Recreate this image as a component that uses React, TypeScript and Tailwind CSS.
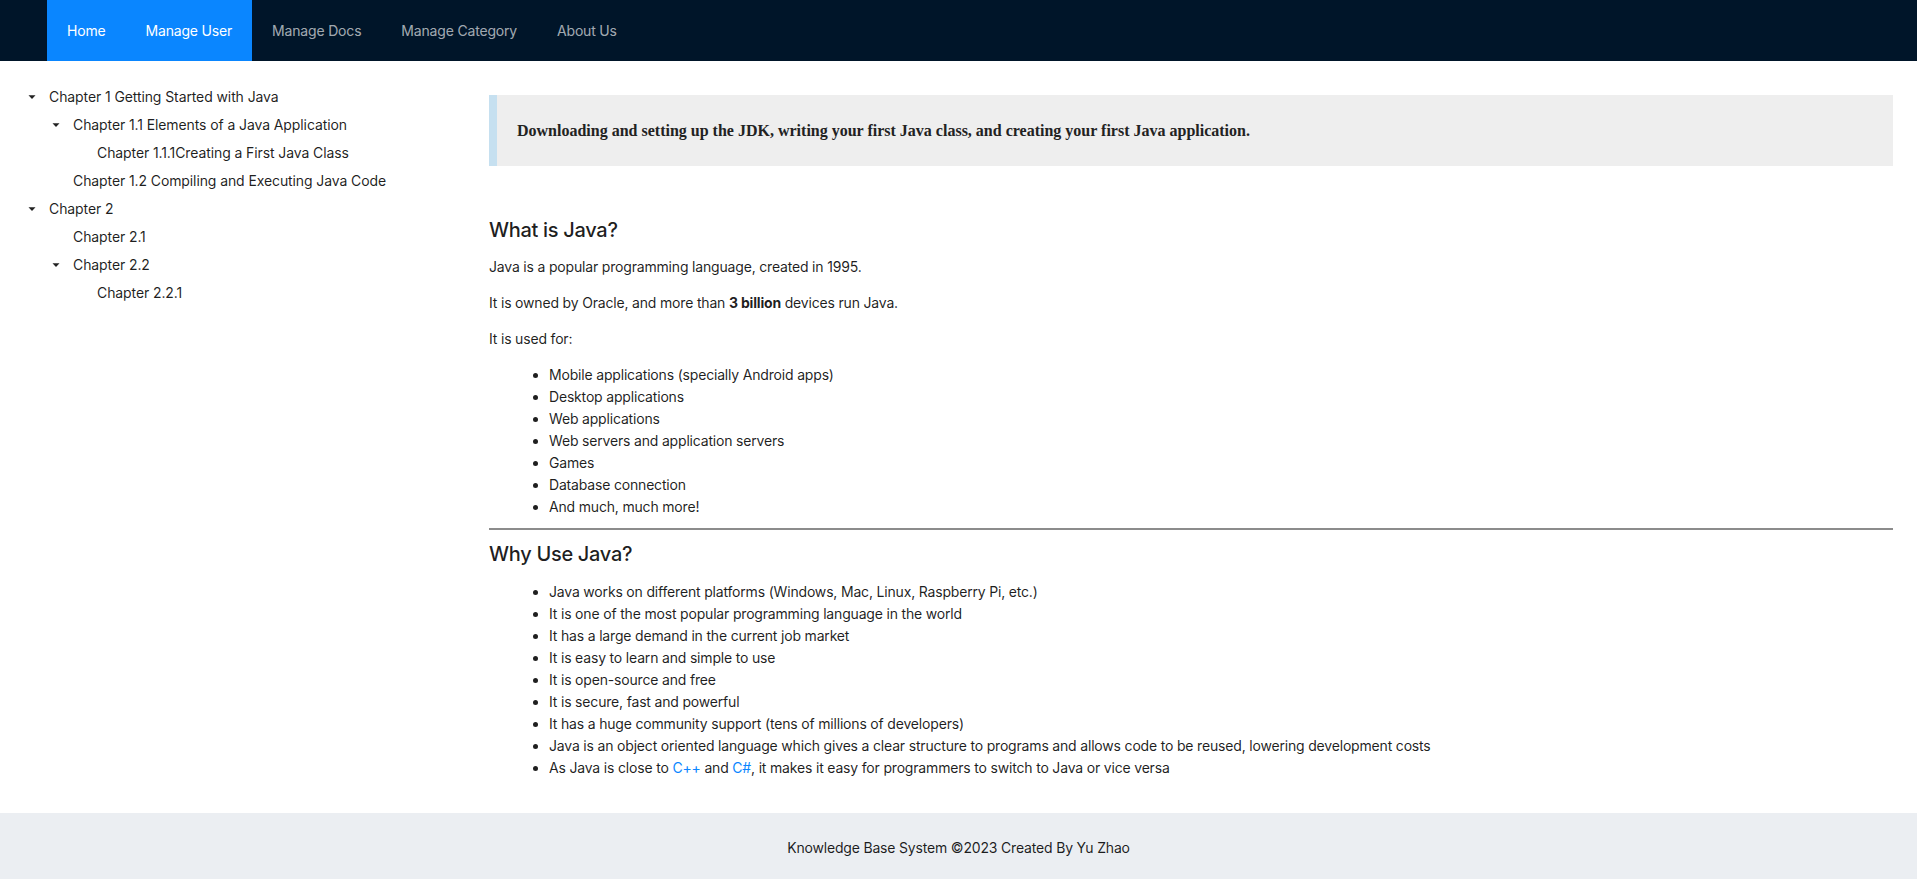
import React from 'react';

const navItems = [
  { label: 'Home', active: true },
  { label: 'Manage User', active: true },
  { label: 'Manage Docs', active: false },
  { label: 'Manage Category', active: false },
  { label: 'About Us', active: false },
];

type TreeNode = { title: string; level: number; open?: boolean };

const tree: TreeNode[] = [
  { title: 'Chapter 1 Getting Started with Java', level: 0, open: true },
  { title: 'Chapter 1.1 Elements of a Java Application', level: 1, open: true },
  { title: 'Chapter 1.1.1Creating a First Java Class', level: 2 },
  { title: 'Chapter 1.2 Compiling and Executing Java Code', level: 1 },
  { title: 'Chapter 2', level: 0, open: true },
  { title: 'Chapter 2.1', level: 1 },
  { title: 'Chapter 2.2', level: 1, open: true },
  { title: 'Chapter 2.2.1', level: 2 },
];

const usedFor = [
  'Mobile applications (specially Android apps)',
  'Desktop applications',
  'Web applications',
  'Web servers and application servers',
  'Games',
  'Database connection',
  'And much, much more!',
];

const whyJava = [
  'Java works on different platforms (Windows, Mac, Linux, Raspberry Pi, etc.)',
  'It is one of the most popular programming language in the world',
  'It has a large demand in the current job market',
  'It is easy to learn and simple to use',
  'It is open-source and free',
  'It is secure, fast and powerful',
  'It has a huge community support (tens of millions of developers)',
  'Java is an object oriented language which gives a clear structure to programs and allows code to be reused, lowering development costs',
];

function Caret() {
  return (
    <svg width="10" height="10" viewBox="0 0 10 10" className="text-[#222]">
      <path d="M1.5 3.2 L8.5 3.2 L5 7 Z" fill="currentColor" />
    </svg>
  );
}

function Sidebar() {
  return (
    <aside className="w-[465px] shrink-0 pt-[22px] pl-5">
      {tree.map((node, i) => (
        <div key={i} className="flex items-center h-7" style={{ paddingLeft: node.level * 24 }}>
          <span className="w-6 h-6 flex items-center justify-center shrink-0">
            {node.open ? <Caret /> : null}
          </span>
          <span className="pl-[5px] pr-1 leading-[24px] text-[14px] tracking-[-0.1px] text-[rgba(0,0,0,0.88)] whitespace-nowrap">
            {node.title}
          </span>
        </div>
      ))}
    </aside>
  );
}

export default function App() {
  return (
    <div className="min-h-screen flex flex-col bg-white font-['Inter',sans-serif] text-[14px] tracking-[-0.18px] text-[rgba(0,0,0,0.88)]">
      {/* Header */}
      <header className="h-[61px] bg-[#001529] flex pl-[47px] shrink-0">
        {navItems.map((item) => (
          <div
            key={item.label}
            className={
              item.active
                ? 'px-5 flex items-center bg-[#0a86ff] text-white text-[14px]'
                : 'px-5 flex items-center text-[rgba(255,255,255,0.65)] text-[14px]'
            }
          >
            {item.label}
          </div>
        ))}
      </header>

      <div className="flex flex-1">
        <Sidebar />

        <main className="flex-1 pt-[34px] pr-6 pl-6 pb-[34px]">
          {/* Summary */}
          <blockquote className="h-[71px] flex items-center bg-[#eeeeee] border-l-[8px] border-[#c6e0f0] pl-[20px]">
            <p className="font-['Liberation_Serif',serif] font-bold text-[16px] tracking-normal text-[#222]">
              Downloading and setting up the JDK, writing your first Java class, and creating your first Java application.
            </p>
          </blockquote>

          <h2 className="mt-[50px] mb-3 text-[20px] leading-[28px] font-medium tracking-[-0.3px] text-[rgba(0,0,0,0.88)]">What is Java?</h2>
          <p className="leading-[22px] mb-[14px]">Java is a popular programming language, created in 1995.</p>
          <p className="leading-[22px] mb-[14px]">
            It is owned by Oracle, and more than <strong className="font-bold">3 billion</strong> devices run Java.
          </p>
          <p className="leading-[22px] mb-[14px]">It is used for:</p>
          <ul className="list-disc pl-[60px] leading-[22px]">
            {usedFor.map((t) => (
              <li key={t}>{t}</li>
            ))}
          </ul>

          <hr className="mt-[10px] border-0 h-[2px] bg-[#8c8c8c]" />

          <h2 className="mt-[10px] mb-[13px] text-[20px] leading-[28px] font-medium tracking-[-0.3px] text-[rgba(0,0,0,0.88)]">Why Use Java?</h2>
          <ul className="list-disc pl-[60px] leading-[22px]">
            {whyJava.map((t) => (
              <li key={t}>{t}</li>
            ))}
            <li>
              As Java is close to <a className="text-[#0a86ff]">C++</a> and <a className="text-[#0a86ff]">C#</a>, it makes it
              easy for programmers to switch to Java or vice versa
            </li>
          </ul>
        </main>
      </div>

      <footer className="bg-[#ebeef2] py-6 text-center leading-[22px] text-[14px] text-[rgba(0,0,0,0.88)]">
        Knowledge Base System ©2023 Created By Yu Zhao
      </footer>
    </div>
  );
}
